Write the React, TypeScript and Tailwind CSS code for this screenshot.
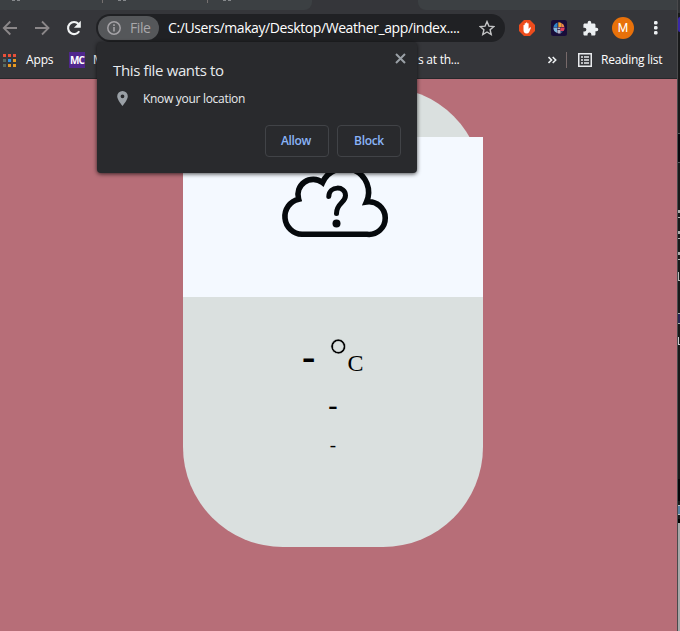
import React from "react";

const APP_DOTS = [
  "bg-[#e8503a]", "bg-[#e8503a]", "bg-[#e8503a]",
  "bg-[#56695f]", "bg-[#2f8fe0]", "bg-[#e69a22]",
  "bg-[#56695f]", "bg-[#e69a22]", "bg-[#e69a22]",
];

function TabStrip() {
  return (
    <div className="flex h-[10px] bg-[#35363a]">
      <div className="flex h-[10px] w-[312px] overflow-hidden rounded-br-[8px] bg-[#3c4043]">
        <div className="flex h-[3px] w-[103px] justify-start border-r border-[#75706f] pl-3">
          <Crumb />
        </div>
        <div className="flex h-[3px] w-[105px] border-r border-[#75706f] pl-[15px]">
          <Crumb />
        </div>
        <div className="pl-[15px]"><Crumb /></div>
      </div>
      <div className="w-[106px] bg-[#35363a]" />
      <div className="flex-1 rounded-bl-[8px] bg-[#3c4043]" />
    </div>
  );
}

function Crumb() {
  return (
    <div className="flex gap-[2px]">
      <i className="h-px w-[3px] bg-[#85888b]" />
      <i className="h-px w-[3px] bg-[#85888b]" />
    </div>
  );
}

function Toolbar() {
  return (
    <div className="flex h-[36px] items-center bg-[#35363a]">
      <svg className="h-9 w-[96px] shrink-0" viewBox="0 10 96 36" fill="none">
        <path d="M17 28H4M10.300 21.500L3.800 28l6.500 6.500" stroke="#8b8789" strokeWidth="1.800" />
        <path d="M35 28h13.500M42 21.500l6.500 6.500-6.500 6.500" stroke="#8b8789" strokeWidth="1.800" />
        <path d="M79.200 31.200a6 6 0 1 1-.7-7.200" stroke="#f1f3f4" strokeWidth="2.100" />
        <path d="M80.800 20.800v6.900h-6.900z" fill="#f1f3f4" />
      </svg>
      <div className="flex h-[28px] w-[409px] shrink-0 items-center rounded-full bg-[#202124] pl-[2px]">
        <div className="flex h-6 w-[61px] items-center rounded-full bg-[#55575a] pl-[9px]">
          <svg width="14" height="14" viewBox="0 0 14 14" fill="none" stroke="#a4a2a6">
            <circle cx="7" cy="7" r="6.200" strokeWidth="1.500" />
            <path d="M7 6v4.500M7 3.300v1.600" strokeWidth="1.600" />
          </svg>
          <span className="ml-[9px] text-[14px] leading-5 tracking-[-0.4px] text-[#a9a7ab]">File</span>
        </div>
        <span className="ml-[9px] w-[293px] whitespace-nowrap text-[14px] leading-5 tracking-[-0.41px] text-white">
          C:/Users/makay/Desktop/Weather_app/index....
        </span>
        <svg className="ml-[18px] shrink-0" width="16" height="16" viewBox="0 0 16 16">
          <path d="M8 1.600l1.900 4.500 4.900.4-3.700 3.200 1.100 4.800L8 12l-4.200 2.500 1.100-4.800-3.700-3.200 4.900-.4z" fill="none" stroke="#c4c5c6" strokeWidth="1.400" />
        </svg>
      </div>
      <svg className="ml-[14px] shrink-0" width="16" height="16" viewBox="0 0 16 16">
        <path d="M5 0h6l5 5v6l-5 5H5l-5-5V5z" fill="#ed4c1c" />
        <path d="M4.500 9V5.200q.7-.8 1.200 0V3.500q.8-.9 1.300 0V2.700q.7-.7 1.300 0v.8q.8-.7 1.300 0V9l1.200-1.500q.8-.4 1.200.2L10.200 12q-.8 1.500-2.700 1.500Q4.500 13.200 4.500 10z" fill="white" />
      </svg>
      <svg className="ml-4 shrink-0" width="16" height="16" viewBox="0 0 16 16">
        <rect width="16" height="16" rx="2.500" fill="#180d39" />
        <path d="M2.500 7a6 6 0 0 1 4-4.500V7z" fill="#2e84c8" />
        <path d="M7.300 2.300a5.500 5.500 0 0 1 3 .6V7h-3z" fill="#f0a132" />
        <path d="M10.300 3A5 5 0 0 1 13.400 7h-3.100z" fill="#ee8a4c" />
        <path d="M2.300 7.500h3.800v5.500A6 6 0 0 1 2.300 7.500z" fill="#82b8db" />
        <path d="M6.400 9.800h3.200v3.800H7.500l-1.100-.5zM6.500 7.500h2.700v1.600H6.500z" fill="#b8b6c8" />
        <path d="M9.400 7.500h4.300a6 6 0 0 1-1 3.500H9.400z" fill="#df405f" />
        <path d="M10.200 11.500H12l-1.800 1.600z" fill="#388bbd" />
      </svg>
      <svg className="ml-[15px] shrink-0" width="17" height="17" viewBox="0 0 24 24" fill="#eceff1">
        <path d="M20.500 11H19V7c0-1.100-.9-2-2-2h-4V3.500a2.500 2.500 0 0 0-5 0V5H4c-1.100 0-2 .9-2 2v3.800h1.500a2.700 2.700 0 0 1 0 5.400H2V20c0 1.100.9 2 2 2h3.800v-1.500a2.700 2.700 0 0 1 5.400 0V22H17c1.100 0 2-.9 2-2v-4h1.500a2.500 2.500 0 0 0 0-5z" />
      </svg>
      <div className="ml-[13px] flex size-[22px] shrink-0 items-center justify-center rounded-full bg-[#e8710a] font-[Roboto,sans-serif] text-[12px] text-white">M</div>
      <svg className="ml-5 shrink-0" width="4" height="14" fill="#eceff1">
        <rect y="0" width="3.500" height="3.500" rx="1.200" /><rect y="5" width="3.500" height="3.500" rx="1.200" /><rect y="10" width="3.500" height="3.500" rx="1.200" />
      </svg>
    </div>
  );
}

function Bookmarks() {
  return (
    <div className="flex h-[33px] items-center border-b border-[#27282b] bg-[#35363a] pb-[4px] text-[12px] text-white">
      <div className="ml-[3px] grid w-[13px] shrink-0 grid-cols-3 gap-x-[2px] gap-y-[2px]">
        {APP_DOTS.map((c, i) => <i key={i} className={`h-[3px] w-[3px] ${c}`} />)}
      </div>
      <span className="ml-[10px] w-[43px] shrink-0 tracking-[-0.15px]">Apps</span>
      <div className="flex size-4 shrink-0 items-center justify-center bg-[#50278d] text-[10px] font-bold tracking-[-0.9px]">MC</div>
      <span className="ml-2 w-[325px] shrink-0">M</span>
      <span className="w-[130px] shrink-0 whitespace-nowrap tracking-[-0.25px]">s at th...</span>
      <svg className="shrink-0" width="9" height="8" fill="none" stroke="#eceff1" strokeWidth="1.600"><path d="M.5 1l3 3-3 3M4.700 1l3 3-3 3" /></svg>
      <div className="ml-[9px] h-4 w-px bg-[#77696a]" />
      <svg className="ml-[11px] shrink-0" width="14" height="14" viewBox="0 0 14 14" fill="none" stroke="#e8eaed">
        <rect x=".75" y=".75" width="12.500" height="12.500" strokeWidth="1.500" />
        <path d="M3 4h2M6 4h5M3 7h2M6 7h5M3 10h2M6 10h5" strokeWidth="1.600" />
      </svg>
      <span className="ml-[9px] whitespace-nowrap tracking-[-0.24px]">Reading list</span>
    </div>
  );
}

function WeatherCard() {
  return (
    <div className="ml-[183px] mt-2 flex h-[460px] w-[300px] flex-col rounded-[100px] bg-[#dae0df] pt-[50px]">
      <div className="h-[160px] shrink-0 bg-[#f4f9ff]">
        <svg width="300" height="160" viewBox="184 137 300 160" fill="none" stroke="#060a0d" strokeLinecap="round">
          <path d="M303 234.300A17.800 17.800 0 0 1 299.600 199.200A15.300 15.300 0 0 1 323.500 182.500A24 24 0 0 1 367.500 202A16.300 16.300 0 1 1 368 234.300Z" strokeWidth="5.600" strokeLinejoin="miter" />
          <path d="M329.800 196.500C330 185.500 346.500 185.500 346.500 195.500C346.500 203 337.500 203 337.500 213.500" strokeWidth="5" />
          <circle cx="337.500" cy="223.500" r="4" fill="#060a0d" stroke="none" />
        </svg>
      </div>
      <div className="flex h-[81px] shrink-0 items-start pl-[119px] pt-[30px]">
        <svg width="62" height="51" viewBox="0 0 62 51" className="shrink-0 overflow-visible">
          <text x="0" y="43" fontFamily="Liberation Serif, serif" fontWeight="bold" fontSize="40">-</text>
          <text x="26.500" y="44.500" fontFamily="Liberation Serif, serif" fontSize="49" stroke="#dae0df" strokeWidth="0.600">°</text>
          <text x="45.500" y="44" fontFamily="Liberation Serif, serif" fontSize="24">C</text>
        </svg>
      </div>
      <div className="mt-[7px] h-[41px] text-center font-['Liberation_Serif',serif] text-[28px] font-bold leading-[40px] text-black">-</div>
      <div className="text-center font-['Liberation_Serif',serif] text-[19px] leading-[38px] text-black">-</div>
    </div>
  );
}

function PermissionPopup() {
  return (
    <div className="absolute left-[97px] top-[42px] h-[131px] w-[320px] rounded-[4px] bg-[#292a2d] px-4 pt-[16px] shadow-[0_1px_4px_rgba(0,0,0,0.7)]">
      <svg className="absolute right-[11px] top-[11px]" width="11" height="11" stroke="#9aa0a6" strokeWidth="2"><path d="M1 1l9 9M10 1L1 10" /></svg>
      <div className="text-[15px] leading-6 tracking-[-0.36px] text-[#e8eaed]">This file wants to</div>
      <div className="mt-[5px] flex h-6 items-center">
        <svg className="mb-[2px] ml-1" width="11" height="15" viewBox="0 0 11 15" fill="#9aa0a6">
          <path fillRule="evenodd" d="M5.500 0A5.300 5.300 0 0 0 .2 5.300C.2 9 5.500 15 5.500 15s5.300-6 5.300-9.700A5.300 5.300 0 0 0 5.500 0zm0 3.400a1.900 1.900 0 1 1 0 3.800 1.900 1.900 0 0 1 0-3.800z" />
        </svg>
        <span className="ml-[15px] text-[12px] tracking-[-0.3px] text-[#e8eaed]">Know your location</span>
      </div>
      <div className="mt-[14px] flex justify-end gap-2 text-[12px] font-semibold tracking-[-0.3px] text-[#8ab4f8]">
        <button className="h-8 w-16 rounded-[4px] border border-[#414347] pr-[2px]">Allow</button>
        <button className="h-8 w-16 rounded-[4px] border border-[#414347]">Block</button>
      </div>
    </div>
  );
}

/* Sliver of the window lying behind the browser. */
function BackgroundWindow() {
  return (
    <div className="flex w-[3px] shrink-0 flex-col overflow-hidden border-l border-[#4a4a4c] bg-[#18191a]">
      <div className="h-[13px] bg-[#303235]" />
      <div className="mt-1 h-[15px] rounded-l-full bg-[#3928a7]" />
      <div className="mt-[101px] h-[30px] border-y border-[#55565a] bg-[#08070d]" />
      <div className="mt-[47px] h-[8px] border-b border-[#b8b8b8] border-t-[3px] border-t-[#aaa]" />
      <div className="mt-[13px] h-[8px] border-b border-[#b8b8b8] border-t-[3px] border-t-[#aaa]" />
      <div className="mt-[13px] h-[8px] border-b border-[#b8b8b8] border-t-[3px] border-t-[#aaa]" />
      <div className="mt-[12px] h-[9px] border-b border-l border-[#b8b8b8]" />
      <div className="mt-[32px] h-[11px] border-y border-[#aaa] bg-[#262451]" />
      <div className="mt-[13px] h-[8px] border-b border-l border-[#c8c8ce]" />
      <div className="mt-[134px] h-[22px] bg-[#050509]" />
      <div className="mt-1 h-[10px] border-y border-[#bdbdbd] bg-[#577fa0]" />
      <div className="mt-1 h-1 bg-black" />
      <div className="flex-1 bg-[#a7a8a9]" />
    </div>
  );
}

export default function App() {
  return (
    <div className="relative flex h-[631px] w-[680px] overflow-hidden bg-[#b76e78] font-['Open_Sans',sans-serif]">
      <main className="w-[677px] shrink-0">
        <TabStrip />
        <Toolbar />
        <Bookmarks />
        <WeatherCard />
      </main>
      <BackgroundWindow />
      <PermissionPopup />
    </div>
  );
}
